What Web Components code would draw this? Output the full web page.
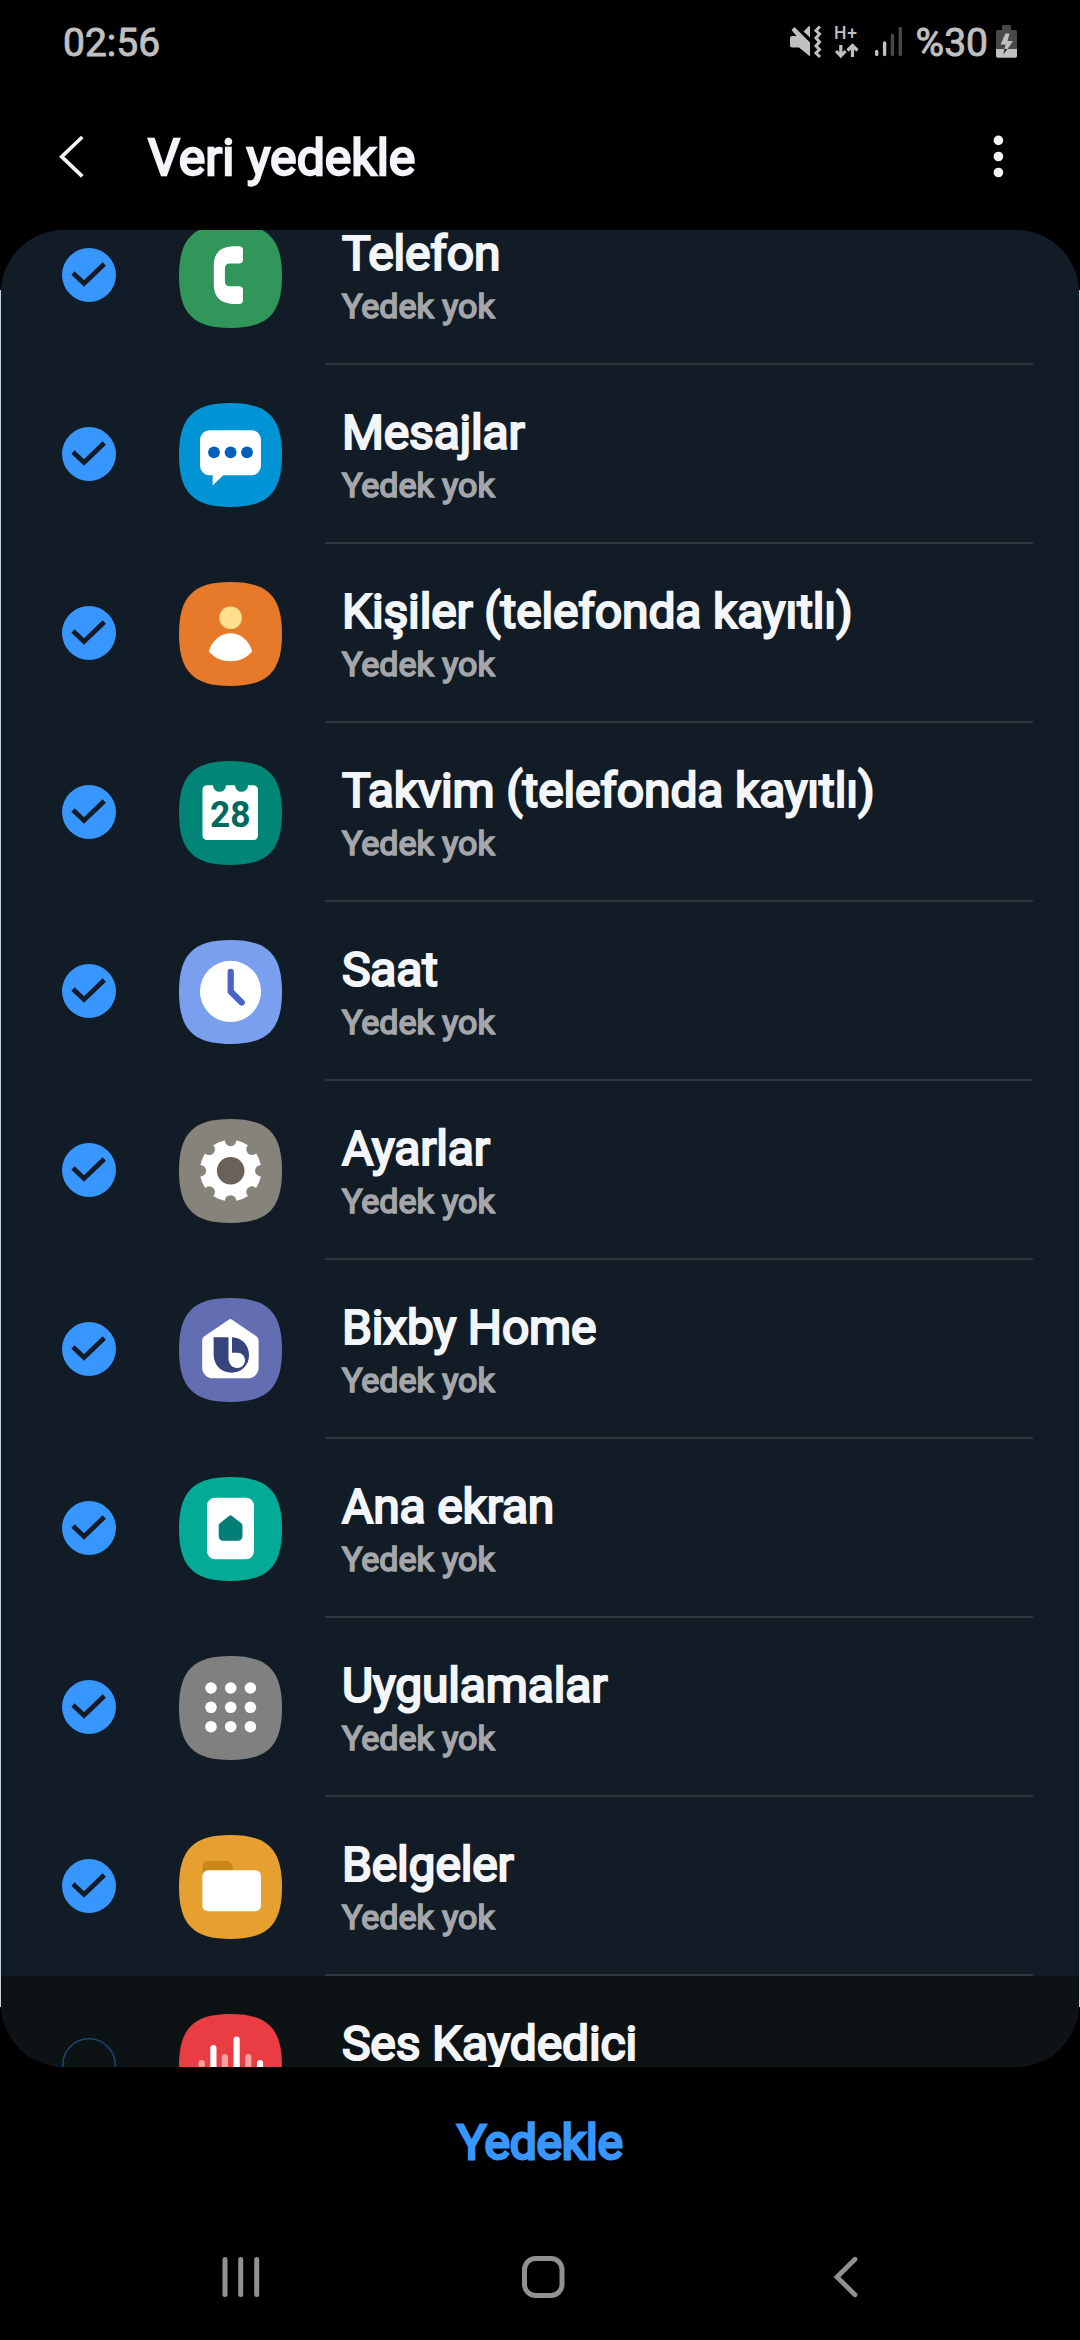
<!DOCTYPE html>
<html lang="tr">
<head>
<meta charset="utf-8">
<title>Veri yedekle</title>
<style>
    html, body {
        margin: 0;
        background: #000;
    }
    body {
        width: 1080px;
        height: 2340px;
        overflow: hidden;
        font-family: Roboto, "Liberation Sans", sans-serif;
    }
</style>
</head>
<body>
<backup-screen></backup-screen>

<script>
const define = (name, html, setup) => {
    const template = document.createElement('template');
    template.innerHTML = html;
    customElements.define(name, class extends HTMLElement {
        constructor() {
            super();
            this.attachShadow({ mode: 'open' });
            this.shadowRoot.appendChild(template.content.cloneNode(true));
        }
        connectedCallback() {
            if (setup) setup(this, this.shadowRoot);
        }
    });
};

// app glyphs, all drawn on a 103 x 104 tile
const notches = [0, 45, 90, 135, 180, 225, 270, 315]
    .map(a => `<circle cx="51.6" cy="21.5" r="5.7" fill="#86837b" transform="rotate(${a} 51.6 51.7)"/>`).join('');
const dots = [32, 51.3, 70.7]
    .map(y => [32, 51.7, 71.4].map(x => `<circle cx="${x}" cy="${y}" r="5.8" fill="#fff"/>`).join('')).join('');

const icons = {
    phone: ['#31965a', `<path fill="#fff" d="M60 22.3H55C42 22.3 34.8 29 34.8 41V61C34.8 74 43 80 56 80H60a4 4 0 0 0 4-4V66.3a4 4 0 0 0-4-4H51c-3.4 0-5.1-1.5-5.1-5V44.6c0-3.5 1.7-5 5.1-5H60a4 4 0 0 0 4-4V26.3a4 4 0 0 0-4-4z"/>`],
    messages: ['#0094d4', `<rect x="21" y="27.3" width="61" height="45" rx="9.5" fill="#fff"/><path fill="#fff" d="M33.7 71V82.5L45.5 71z"/>
        <g fill="#0060bc"><circle cx="35" cy="49.3" r="5.9"/><circle cx="51.6" cy="49.3" r="5.9"/><circle cx="68" cy="49.3" r="5.9"/></g>`],
    contacts: ['#e67a2a', `<circle cx="51.6" cy="35.7" r="11.3" fill="#ffe08f"/><path fill="#fff" d="M30 68.5C34 57.5 42 51.3 51.5 51.3S69 57.5 73 68.5Q73.2 69.5 72.5 70.3C67 76.3 60 79.3 51.5 79.3S36 76.3 30.5 70.3Q29.7 69.5 30 68.5z"/>`],
    calendar: ['#008576', `<path fill="#fff" d="M28 24.3H34a6.5 6.5 0 0 0 13 0H56a6.5 6.5 0 0 0 13 0H74.5a4.5 4.5 0 0 1 4.5 4.5V74.5a4.5 4.5 0 0 1-4.5 4.5H28a4.5 4.5 0 0 1-4.5-4.5V28.8a4.5 4.5 0 0 1 4.5-4.5z"/>
        <text x="51.3" y="66.2" text-anchor="middle" font-size="36.5" font-weight="700" textLength="40.5" lengthAdjust="spacingAndGlyphs" fill="#00695f">28</text>`],
    clock: ['#7a9fef', `<circle cx="51.5" cy="51.4" r="30.6" fill="#fff"/><path d="M51.7 32V51.5L62.7 62.5" fill="none" stroke="#4a63c8" stroke-width="6.3" stroke-linecap="round" stroke-linejoin="round"/>`],
    settings: ['#86837b', `<circle cx="51.6" cy="51.7" r="30.7" fill="#fff"/>${notches}<circle cx="51.7" cy="51.7" r="13.8" fill="#6b6158"/>`],
    bixby: ['#626eb1', `<path fill="#fff" d="M49.7 21.7Q51.4 20.5 53.1 21.7L77.7 38.5Q79.6 39.9 79.6 42.3V69.5A10.8 10.8 0 0 1 68.8 80.3H34A10.8 10.8 0 0 1 23.2 69.5V42.3Q23.2 39.9 25.1 38.5z"/>
        <path fill="#38447c" d="M34.6 39.3H53C63 39.8 70 47 70 57.5 70 67.5 62 74.7 52.5 74.7 42 74.7 34.6 67 34.6 56z"/>
        <path fill="#fff" d="M49.5 39H53V54.7H58.5A7.6 7.6 0 0 1 66.1 62.3 7.7 7.7 0 0 1 58.4 70C53 70 49.5 66 49.5 60z"/>`],
    home: ['#03ab96', `<rect x="28" y="20.7" width="47" height="61.6" rx="8" fill="#fff"/><path fill="#007f77" d="M50.3 38.8Q51.5 37.9 52.7 38.8L62.3 46.3Q63.5 47.2 63.5 48.7V59.2A4.5 4.5 0 0 1 59 63.7H44.2A4.5 4.5 0 0 1 39.7 59.2V48.7Q39.7 47.2 40.9 46.3z"/>`],
    apps: ['#808080', dots],
    files: ['#e5a030', `<path fill="#c98619" d="M23.4 40V31.5A5.5 5.5 0 0 1 28.9 26H47.5Q51 26 52.2 29.2L54.8 36V40z"/><rect x="23.4" y="35.3" width="58.6" height="40.9" rx="5.5" fill="#fff"/>`],
    recorder: ['#e93c43', `<g stroke-width="6.2" stroke-linecap="round" fill="none"><path stroke="#ffa0a5" d="M22.6 49V58M45.8 43V62M69.3 43V62"/><path stroke="#fff" d="M34.4 34.2V70M57.6 25.5V78M81 49V58"/></g>`]
};

define('app-icon', `
    <style>
        :host { display: block; width: 103px; height: 104px; flex: none; }
        svg { display: block; }
    </style>
    <svg width="103" height="104" viewBox="0 0 103 104" font-family="Roboto, sans-serif"></svg>
`, (el, root) => {
    const [color, glyph] = icons[el.getAttribute('name')];
    root.querySelector('svg').innerHTML =
        `<path fill="${color}" d="M0 52C0 14.5 14.5 0 51.5 0S103 14.5 103 52 88.5 104 51.5 104 0 89.5 0 52z"/>${glyph}`;
});

define('check-mark', `
    <style>
        :host { display: block; width: 54px; height: 54px; flex: none; }
        svg { display: block; }
        .off { display: none; }
        :host([off]) .off { display: inline; }
        :host([off]) .on { display: none; }
    </style>
    <svg width="54" height="54" viewBox="0 0 54 54" fill="none">
        <g class="on">
            <circle cx="27" cy="27" r="27" fill="#3796ff"/>
            <path d="M11 25L22 35.5L42.3 16" stroke="#111c26" stroke-width="4.8"/>
        </g>
        <circle class="off" cx="27" cy="27" r="26.2" stroke="#1c4674" stroke-width="1.5"/>
    </svg>
`);

define('backup-item', `
    <style>
        :host {
            display: flex;
            height: 179px;
            padding: 0 46px 0 61px;
            background: #111c26;
        }
        :host([off]) { background: #0d1215; }
        check-mark { margin-top: 62px; }
        app-icon { margin: 37.7px 43px 0 63px; }
        .text {
            flex: 1;
            box-sizing: border-box;
            padding: 39.5px 0 0 17px;
            border-bottom: 2px solid #2e353b;
            white-space: nowrap;
        }
        .title {
            font-size: 48px;
            line-height: 56px;
            letter-spacing: -0.15px;
            color: #f3f5f9;
            -webkit-text-stroke: 2.2px #f3f5f9;
        }
        .sub {
            margin-top: 4.500px;
            font-size: 34px;
            line-height: 40px;
            color: #a4a6aa;
            -webkit-text-stroke: 1.700px #a4a6aa;
        }
    </style>
    <check-mark></check-mark>
    <app-icon></app-icon>
    <div class="text">
        <div class="title"><slot></slot></div>
        <div class="sub">Yedek yok</div>
    </div>
`, (el, root) => {
    root.querySelector('check-mark').toggleAttribute('off', el.hasAttribute('off'));
});

define('backup-list', `
    <style>
        :host {
            display: block;
            height: 1837px;
            padding: 0 1px;
            background: linear-gradient(transparent 60px, #c2d3da 60px, #c2d3da 1777px, transparent 1777px);
        }
        .panel {
            height: 1837px;
            overflow: hidden;
            border-radius: 63px;
            background: #111c26;
        }
        .scroll { margin-top: -44px; }
    </style>
    <div class="panel"><div class="scroll"><slot></slot></div></div>
`);

define('status-bar', `
    <style>
        :host {
            display: flex;
            align-items: flex-start;
            height: 84px;
            box-sizing: border-box;
            padding: 20px 62px 0 63px;
            color: #c0c0c0;
            font-size: 39px;
            line-height: 46px;
            -webkit-text-stroke: 0.9px #c0c0c0;
        }
        .space { flex: 1; }
        svg { display: block; margin-top: 4px; -webkit-text-stroke: 0; }
        .pct { margin: 0 8px 0 13px; }
    </style>
    <span>02:56</span>
    <span class="space"></span>
    <svg width="33" height="36" viewBox="788 24 33 36" fill="#c0c0c0">
        <path d="M789 38Q789 36 791 36H795.5L790.5 30 793.5 27 809 42.5V56.5L798 47.5H791Q789 47.5 789 45.5z"/>
        <path d="M802.5 31.5L807.5 26.5Q809 25.5 809 27V37.5z"/>
        <path fill="none" stroke="#c0c0c0" stroke-width="3" d="M819 26.5L815 30.5 818.5 34 815 38 818.5 42 815 46 818.5 49.5 815 53 819 57"/>
    </svg>
    <svg width="25" height="36" viewBox="833 24 25 36" fill="none" stroke="#c0c0c0" stroke-width="3.2" style="margin-left:12px">
        <text x="833" y="39.2" font-size="17.5" font-weight="500" fill="#c0c0c0" stroke="none" textLength="23">H+</text>
        <path d="M839.8 45V55.5M835 51L839.8 56 844.6 51M851.5 57V46.5M846.5 50.5L851.5 45.5 856.5 50.5"/>
    </svg>
    <svg width="28" height="36" viewBox="874 24 28 36" style="margin-left:16px">
        <g stroke-width="3.4" stroke-linecap="round">
            <path stroke="#c0c0c0" d="M875.7 51.5V54.5M883.6 43V54.5"/>
            <path stroke="#484848" d="M891.4 35.5V54.5M899.3 28.5V54.5"/>
        </g>
    </svg>
    <span class="pct">%30</span>
    <svg width="22" height="36" viewBox="996 24 22 36">
        <path fill="#484848" d="M996 31.5Q996 30 997.5 30H1002V26.5Q1002 25 1003.5 25H1009.5Q1011 25 1011 26.5V30H1015.5Q1017 30 1017 31.5V49H996z"/>
        <path fill="#c0c0c0" d="M996 49H1017V56Q1017 57.8 1015.2 57.8H997.8Q996 57.8 996 56z"/>
        <path fill="#c0c0c0" d="M1005.5 33.5H1009.500L1007.5 41H1013L1007.5 49H1004.500L1005.500 44.5H1000.5z"/>
        <path fill="#222" d="M1004.5 49H1007.5L1003.2 54.5z"/>
    </svg>
`);

define('title-bar', `
    <style>
        :host {
            display: flex;
            align-items: flex-start;
            height: 146px;
            box-sizing: border-box;
            padding: 44px 70px 0 57px;
        }
        svg { display: block; margin-top: 6px; }
        h1 {
            flex: 1;
            margin: 0 0 0 63px;
            font-size: 50px;
            line-height: 60px;
            font-weight: 400;
            color: #f3f5f9;
            -webkit-text-stroke: 2.300px #f3f5f9;
        }
    </style>
    <svg width="28" height="46" viewBox="57 134 28 46">
        <path d="M82.3 137L61.7 156.7 82.3 176.3" fill="none" stroke="#f4f4f4" stroke-width="3.7"/>
    </svg>
    <h1><slot></slot></h1>
    <svg width="24" height="46" viewBox="986 134 24 46" fill="#f4f4f4">
        <circle cx="998.4" cy="140.4" r="4.8"/>
        <circle cx="998.4" cy="156.5" r="4.8"/>
        <circle cx="998.4" cy="172.5" r="4.8"/>
    </svg>
`);

define('action-bar', `
    <style>
        :host {
            display: flex;
            justify-content: center;
            align-items: flex-start;
            height: 145px;
            box-sizing: border-box;
            padding-top: 47.5px;
            font-size: 48px;
            line-height: 56px;
            letter-spacing: -0.2px;
            color: #3796ff;
            -webkit-text-stroke: 2.8px #3796ff;
        }
    </style>
    <slot></slot>
`);

define('nav-bar', `
    <style>
        :host {
            display: flex;
            padding: 42px 221px 0;
        }
        .home { margin: 0 265px 0 259px; }
    </style>
    <svg width="40" height="46" viewBox="221 2254 40 46">
        <path stroke="#919191" stroke-width="5" stroke-linecap="round" d="M225 2259.5V2294.5M240.7 2259.5V2294.5M256.7 2259.5V2294.5"/>
    </svg>
    <svg class="home" width="46" height="46" viewBox="520 2254 46 46">
        <rect x="524.5" y="2258.5" width="37.5" height="37" rx="11" fill="none" stroke="#919191" stroke-width="5"/>
    </svg>
    <svg width="28" height="46" viewBox="831 2254 28 46">
        <path fill="none" stroke="#919191" stroke-width="4.8" stroke-linecap="round" d="M855 2259.3L837 2277 855 2294.7"/>
    </svg>
`);

define('backup-screen', `
    <style>
        :host { display: block; }
    </style>
    <status-bar></status-bar>
    <title-bar>Veri yedekle</title-bar>
    <backup-list></backup-list>
    <action-bar>Yedekle</action-bar>
    <nav-bar></nav-bar>
`, (el, root) => {
    const apps = [
        ['phone', 'Telefon'],
        ['messages', 'Mesajlar'],
        ['contacts', 'Kişiler (telefonda kayıtlı)'],
        ['calendar', 'Takvim (telefonda kayıtlı)'],
        ['clock', 'Saat'],
        ['settings', 'Ayarlar'],
        ['bixby', 'Bixby Home'],
        ['home', 'Ana ekran'],
        ['apps', 'Uygulamalar'],
        ['files', 'Belgeler'],
        ['recorder', 'Ses Kaydedici']
    ];
    const list = root.querySelector('backup-list');
    apps.forEach(([icon, title], i) => {
        const row = document.createElement('backup-item');
        // app-icon reads its name when it connects
        row.shadowRoot.querySelector('app-icon').setAttribute('name', icon);
        row.textContent = title;
        if (i === apps.length - 1) row.setAttribute('off', '');
        list.appendChild(row);
    });
});
</script>
</body>
</html>
